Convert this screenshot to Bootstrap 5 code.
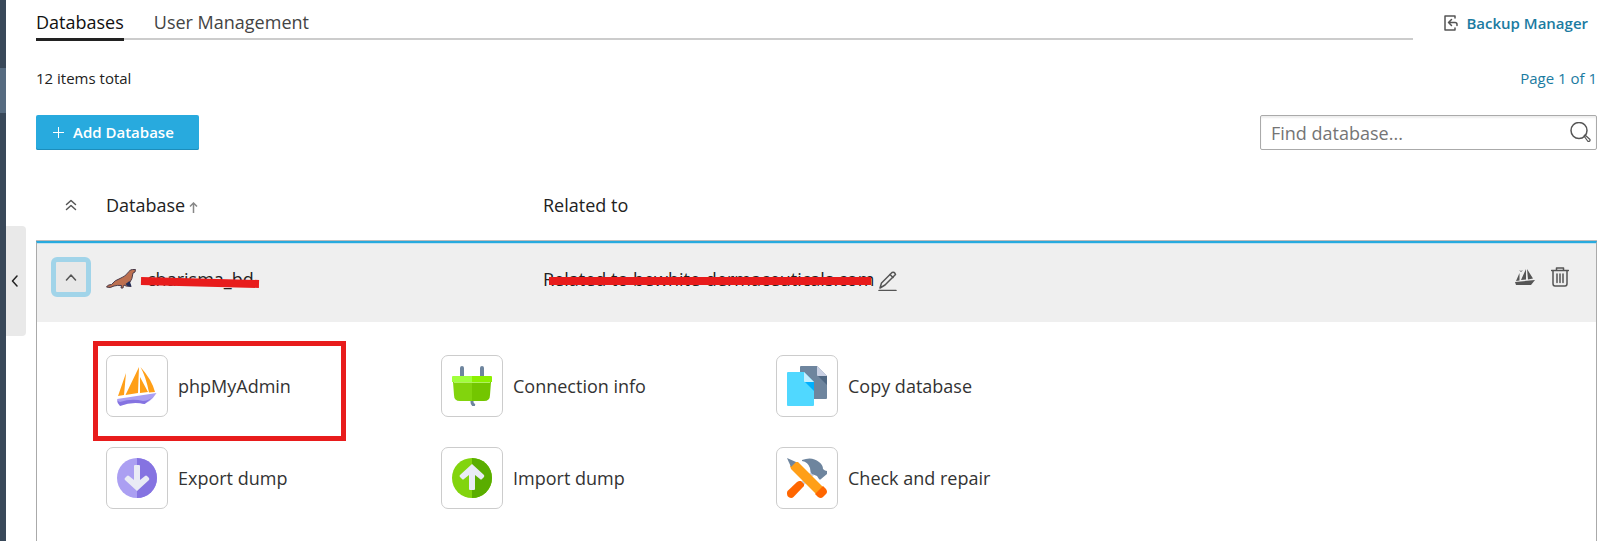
<!DOCTYPE html>
<html lang="en">
<head>
<meta charset="utf-8">
<meta name="viewport" content="width=device-width, initial-scale=1">
<title>Databases</title>
<link href="https://cdn.jsdelivr.net/npm/bootstrap@5.3.0/dist/css/bootstrap.min.css" rel="stylesheet">
<style>
  body { font-family: "Open Sans", "Noto Sans", sans-serif; font-size: 18px; line-height: 24px; color: #222; background: #fff; }
  svg { display: block; flex: none; }
  a { color: #1b7ba1; text-decoration: none; }
  .line-icon { fill: none; stroke: #555; stroke-width: 1.5; stroke-linecap: round; stroke-linejoin: round; }

  .side-strip { width: 6px; background: #394859; padding-top: 68px; }
  .side-current { height: 45px; background: #566b80; }
  .gutter { width: 30px; padding-top: 226px; }
  .collapse-handle { width: 20px; height: 110px; border: 0; padding: 0 2px 0 0; background: #e9e9e9; border-radius: 0 4px 4px 0; }
  .collapse-handle .line-icon { stroke: #222; }
  .page-main { min-width: 0; padding-right: 6px; }

  .tab-bar { gap: 30px; border-bottom: 2px solid #ccc; margin-right: 31px; }
  .tab-bar .nav-link { padding: 10px 0 4px; color: #444; font-weight: 500; border-bottom: 3px solid transparent; margin-bottom: -3px; }
  .tab-bar .nav-link.active { color: #111; border-color: #222; }
  .backup-link { font-size: 15px; font-weight: 600; gap: 8px; margin-right: 9px; padding-top: 11px; }
  .list-info { font-size: 15px; line-height: 20px; margin-top: 28px; }
  .tool-row { margin-top: 27px; }
  .add-btn { width: 163px; height: 35px; padding: 0 0 0 17px; gap: 9px; font-size: 15px; font-weight: 600; color: #fff; background: #28aade; border: 0; border-radius: 2px; box-shadow: inset 0 -1px #1c8dbb; }
  .add-btn:hover { color: #fff; background: #1f9bcd; }
  .find-box { width: 337px; }
  .find-box .form-control { height: 35px; padding: 0 40px 0 10px; font-size: 18px; border: 1px solid #aaa; border-radius: 2px; box-shadow: inset 0 2px 2px #eee; }
  .find-box .form-control::placeholder { color: #757575; }
  .find-btn { right: 6px; top: 7px; border: 0; padding: 0; background: none; }

  .db-table { border-collapse: separate; border-spacing: 0; table-layout: fixed; margin-top: 22px; }
  .db-table th { font-weight: 400; padding: 21px 0 23px; border-bottom: 1px solid #bbb; }
  .col-toggle { width: 70px; }
  .col-name { width: 437px; }
  .col-actions { width: 120px; }
  .db-row td { background: #efefef; border-top: 2px solid #28aade; box-shadow: inset 0 1px #c4e2ef; padding: 24px 0 31px; vertical-align: top; height: 81px; }
  .db-row td.edge-start { padding: 14px 0 0 14px; }
  .edge-start { border-left: 1px solid #aaa; }
  .edge-end { border-right: 1px solid #aaa; }
  .toggle-btn { width: 40px; height: 40px; padding: 0; border: 5px solid #a1d4e9; border-radius: 6px; background: #e8e8e8; }
  .icon-btn { border: 0; padding: 0; background: none; }
  .db-name { gap: 11px; }
  .strike-mark { left: 0; top: 0; }
  .row-actions { padding-right: 27px; }

  .details { padding: 33px 0 32px 69px; }
  .tool-grid { max-width: 1005px; row-gap: 30px; }
  .tool-link { color: #333; gap: 10px; }
  .tool-tile { width: 62px; height: 62px; padding: 10px; border: 1px solid #ccc; border-radius: 7px; }
  .highlight-box { left: -13px; top: -14px; width: 253px; height: 100px; border: 5px solid #e81c1c; pointer-events: none; }
</style>
</head>
<body>
<div class="d-flex min-vh-100">
  <aside class="side-strip flex-shrink-0"><div class="side-current"></div></aside>
  <div class="gutter flex-shrink-0">
    <button class="collapse-handle d-flex align-items-center justify-content-center" type="button" aria-label="Collapse sidebar">
      <svg width="8" height="12" viewBox="0 0 8 12" class="line-icon"><path d="M6 1 1.500 6 6 11"/></svg>
    </button>
  </div>

  <main class="page-main flex-grow-1">
    <header class="d-flex align-items-start">
      <nav class="nav tab-bar flex-grow-1">
        <a class="nav-link active" href="#" aria-current="page">Databases</a>
        <a class="nav-link" href="#">User Management</a>
      </nav>
      <a class="backup-link d-flex align-items-center" href="#">
        <svg width="14" height="16" viewBox="0 0 14 16" class="line-icon"><path d="M11 3V1H1v14h10v-2"/><path d="M7.500 4.500 4.500 7.500l3 3M4.500 7.500H11q2 0 2 2v1"/></svg>
        Backup Manager
      </a>
    </header>

    <div class="list-info d-flex justify-content-between">
      <span>12 items total</span>
      <a href="#">Page 1 of 1</a>
    </div>

    <div class="tool-row d-flex justify-content-between">
      <button class="btn add-btn d-flex align-items-center" type="button">
        <svg width="11" height="11" viewBox="0 0 11 11" stroke="#fff" stroke-width="1"><path d="M5.500 0v11M0 5.500h11"/></svg>
        Add Database
      </button>
      <form class="find-box position-relative" role="search">
        <input class="form-control" type="text" placeholder="Find database..." aria-label="Find database">
        <button class="find-btn position-absolute" type="button" aria-label="Search">
          <svg width="21" height="21" viewBox="0 0 21 21" class="line-icon"><circle cx="9" cy="8.500" r="8"/><path d="m14 14 1-1 5 4.500q.5 2-2 2Z" stroke-width="1.200"/></svg>
        </button>
      </form>
    </div>

    <table class="db-table w-100">
      <colgroup><col class="col-toggle"><col class="col-name"><col><col class="col-actions"></colgroup>
      <thead>
        <tr>
          <th scope="col">
            <button class="icon-btn d-block mx-auto" type="button" aria-label="Collapse all">
              <svg width="12" height="12" viewBox="0 0 12 12" class="line-icon"><path d="m1.500 5.500 4.500-4 4.500 4M1.500 10.500l4.500-4 4.500 4"/></svg>
            </button>
          </th>
          <th scope="col"><span class="d-flex align-items-center gap-1">Database
            <svg class="mt-1" width="9" height="11" viewBox="0 0 9 11" fill="none" stroke="#888" stroke-width="1.500"><path d="M4.500 11V1M1 4.500 4.500 1 8 4.500"/></svg></span></th>
          <th scope="col">Related to</th>
          <th scope="col" aria-label="Actions"></th>
        </tr>
      </thead>
      <tbody>
        <tr class="db-row">
          <td class="edge-start">
            <button class="toggle-btn d-flex align-items-center justify-content-center" type="button" aria-label="Collapse" aria-expanded="true">
              <svg width="12" height="7" viewBox="0 0 12 7" class="line-icon"><path d="m1.500 6 4.500-5 4.500 5"/></svg>
            </button>
          </td>
          <td>
            <div class="db-name d-flex align-items-center">
              <svg width="30" height="20" viewBox="0 0 30 20"><path d="M.5 18q1-2.500 5-2.500Q9 11 14 9.500q5-1.500 9-7 1-2 3.500-2h3L29 3l-2 1q-.5 6-3.500 10l1.500 3.500-5-.5-2-1q-1 2-1 3h-2l.5-2.500q-4-.5-7.500.5-4 2.500-7.500 1Z" fill="#bd7050" stroke="#4a3a48"/><path d="m23.500 12 2 5.500-4-.5-2-2Z" fill="#23305c"/></svg>
              <span class="position-relative">charisma_bd
                <svg class="strike-mark position-absolute" width="118" height="24" viewBox="0 0 118 24" overflow="visible"><path d="M-6 14 112 17" stroke="#e81c1c" stroke-width="8"/></svg>
              </span>
            </div>
          </td>
          <td>
            <div class="d-flex align-items-center gap-1">
              <span class="position-relative">Related to bewhite-dermaceuticals.com
                <svg class="strike-mark position-absolute" width="330" height="24" viewBox="0 0 330 24"><path d="M6 14H328" stroke="#e81c1c" stroke-width="8"/></svg>
              </span>
              <button class="icon-btn pt-1" type="button" aria-label="Edit">
                <svg width="20" height="20" viewBox="0 0 20 20" class="line-icon"><path d="M2 17 3.500 12 14 1.500q2.500-1 3.500 2L7 14Z"/><path d="m12 3.500 3 3M1 19.500h17"/></svg>
              </button>
            </div>
          </td>
          <td class="edge-end">
            <div class="row-actions d-flex justify-content-end align-items-center gap-3">
              <button class="icon-btn" type="button" aria-label="phpMyAdmin">
                <svg width="20" height="18" viewBox="0 0 20 18" fill="#555"><path d="M4.500 5 1 13l3.500-.5ZM11 1 6 12l5-.5ZM12 1l1 10.500 5-1ZM0 14l20-2-4 5H1Z"/><path d="m4 2 2 1 2-1-2 2Z"/></svg>
              </button>
              <button class="icon-btn" type="button" aria-label="Remove">
                <svg width="18" height="20" viewBox="0 0 18 20" class="line-icon"><path d="M.5 3.500h17M5.500 3V1h7v2M2 4v12.500q0 2.500 2 2.500h10q2 0 2-2.500V4M6 7v8.500M9 7v8.500M12 7v8.500"/></svg>
              </button>
            </div>
          </td>
        </tr>
        <tr>
          <td class="details edge-start edge-end" colspan="4">
            <div class="tool-grid row row-cols-3 gx-0">
              <div class="col position-relative">
                <a class="tool-link d-flex align-items-center" href="#">
                  <span class="tool-tile"><svg width="40" height="40" viewBox="0 0 40 40"><path d="M9 7 1 30l6-1ZM22 1 8.500 29l12.500-2ZM23 11v16l8-1ZM23.500 1Q35 14 38 26l-6 .5Q29 11 23.500 1Z" fill="#ff9f18"/><path d="m0 33 39.500-6q-3 5-7 8l-5 3q-12-4-24 1.500Q1 37 0 33Z" fill="#ab9ff2"/><path d="M0 34q2 2 3 2 12-4 23-1 5 0 10-4l-8.500 7q-12-3-24.500 2-3-3-3-6Z" fill="#8573e1"/></svg></span>
                  phpMyAdmin
                </a>
                <div class="highlight-box position-absolute"></div>
              </div>
              <div class="col">
                <a class="tool-link d-flex align-items-center" href="#">
                  <span class="tool-tile"><svg width="40" height="40" viewBox="0 0 40 40"><path d="M8 11V2q0-2 2-2t2 2v9ZM28 11V2q0-2 2-2t2 2v9Z" fill="#6e859e"/><path d="M20 34v2q0 3 3 3.500" fill="none" stroke="#6e859e" stroke-width="3"/><path d="M1 16h19v19H8q-6 0-6-6Z" fill="#82d40d"/><path d="M20 16h19l-1 13q0 6-6 6H20Z" fill="#73c600"/><path d="M1 10h19v6H0v-5q0-1 1-1Z" fill="#a0ff3c"/><path d="M20 10h19q1 0 1 1v5H20Z" fill="#8cf000"/><path d="M2 16.500h36" stroke="#b0f060"/></svg></span>
                  Connection info
                </a>
              </div>
              <div class="col">
                <a class="tool-link d-flex align-items-center" href="#">
                  <span class="tool-tile"><svg width="40" height="40" viewBox="0 0 40 40"><path d="M14 0h16l10 10v22q0 1-1 1H14q-1 0-1-1V1q0-1 1-1Z" fill="#6e859e"/><path d="m31 10 9 9v-9Z" fill="#4f6883"/><path d="m30 0 10 10h-9q-1 0-1-1Z" fill="#c9d0e3"/><path d="M1 6h16l10 10v23q0 1-1 1H1q-1 0-1-1V7q0-1 1-1Z" fill="#50d8ff"/><path d="m18 16 9 9v-9Z" fill="#00b0ff"/><path d="m17 6 10 10h-9q-1 0-1-1Z" fill="#c4efff"/></svg></span>
                  Copy database
                </a>
              </div>
              <div class="col">
                <a class="tool-link d-flex align-items-center" href="#">
                  <span class="tool-tile"><svg width="40" height="40" viewBox="0 0 40 40"><circle cx="20" cy="20" r="20" fill="#ab9ff2"/><path d="M20 0a20 20 0 0 1 0 40Z" fill="#8573e1"/><path d="M17 8q0-1 1-1h4q1 0 1 1v14l5-4q1-1 2 0l2 2q.5 1 0 2L20 33 8 22q-1-1 0-2l2-2q1-1 2 0l5 4Z" fill="#e9ebf5"/></svg></span>
                  Export dump
                </a>
              </div>
              <div class="col">
                <a class="tool-link d-flex align-items-center" href="#">
                  <span class="tool-tile"><svg width="40" height="40" viewBox="0 0 40 40"><circle cx="20" cy="20" r="20" fill="#82d40d"/><path d="M20 0a20 20 0 0 1 0 40Z" fill="#5aad00"/><path d="M17 31q0 1 1 1h4q1 0 1-1V17l5 4q1 1 2 0l2-2q.5-1 0-2L20 6 8 17q-1 1 0 2l2 2q1 1 2 0l5-4Z" fill="#e9ebf5"/></svg></span>
                  Import dump
                </a>
              </div>
              <div class="col">
                <a class="tool-link d-flex align-items-center" href="#">
                  <span class="tool-tile"><svg width="40" height="40" viewBox="0 0 40 40"><path d="m14 24 10-10 3 3-10 10Z" fill="#c9d0e3"/><path d="M15 2Q25-2 32 4q4 3 4 7 2 2 4 2v3l-6 5q-1 1-2 0l-2-3-5-2q-2-2-2-6-2-6-8-7Z" fill="#6e859e"/><path d="m10 24 2-1h2l3 3v2L6.500 39q-2 2-5 0l-1-1q-1-3 0-5Z" fill="#ff6600"/><path d="m3 8 5-4h3L36 29l-7 7L4 11Z" fill="#ff9f18"/><path d="M0 0 9 4 4 9Z" fill="#6e859e"/><path d="m36 28 3 3q2 3 0 5l-3 3q-2 2-5 0l-3-3Z" fill="#ff6600"/></svg></span>
                  Check and repair
                </a>
              </div>
            </div>
          </td>
        </tr>
      </tbody>
    </table>
  </main>
</div>
<script src="https://cdn.jsdelivr.net/npm/bootstrap@5.3.0/dist/js/bootstrap.bundle.min.js"></script>
</body>
</html>
